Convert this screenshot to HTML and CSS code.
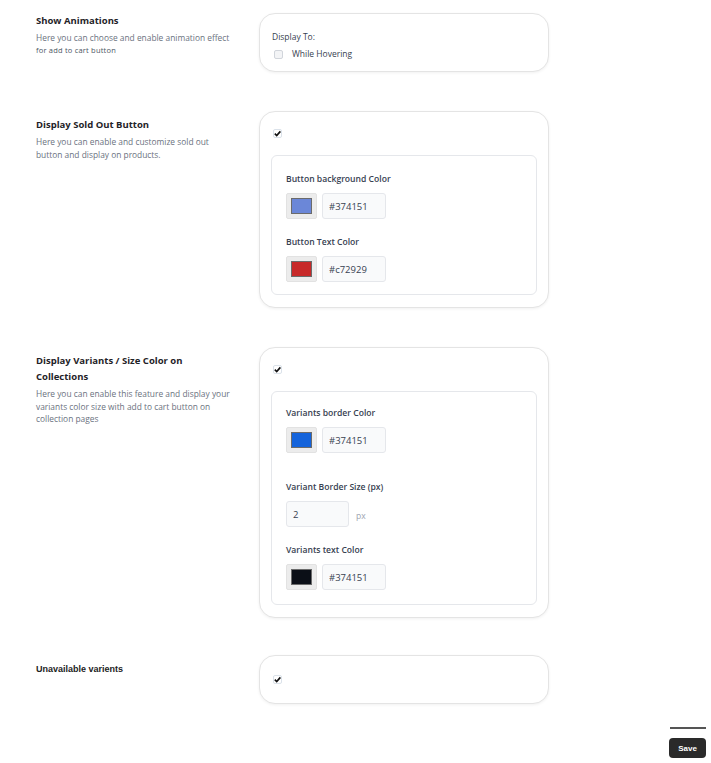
FILE: index.html
```html
<!DOCTYPE html>
<html lang="en">
<head>
  <meta charset="UTF-8">
  <title>Settings</title>
  <link rel="stylesheet" href="styles.css">
</head>
<body>
  <div class="settings">

    <!-- Show animations -->
    <div class="row">
      <div class="info info-top">
        <h3>Show Animations</h3>
        <p>Here you can choose and enable animation effect <span class="small">for add to cart button</span></p>
      </div>
      <div class="card card-anim">
        <div class="label-plain">Display To:</div>
        <label class="check-line">
          <span class="check"></span>
          While Hovering
        </label>
      </div>
    </div>

    <!-- Sold out button -->
    <div class="row">
      <div class="info">
        <h3>Display Sold Out Button</h3>
        <p>Here you can enable and customize sold out button and display on products.</p>
      </div>
      <div class="card">
        <span class="check checked"><svg viewBox="0 0 10 10"><path d="M2 5.2 L4.1 7.2 L8.2 2.6"/></svg></span>
        <div class="inner">
          <div class="field">
            <div class="field-label">Button background Color</div>
            <div class="color-line">
              <span class="swatch"><span class="fill" style="background:#6b87d8"></span></span>
              <input class="text-input" type="text" value="#374151">
            </div>
          </div>
          <div class="field">
            <div class="field-label">Button Text Color</div>
            <div class="color-line">
              <span class="swatch"><span class="fill" style="background:#c72929"></span></span>
              <input class="text-input" type="text" value="#c72929">
            </div>
          </div>
        </div>
      </div>
    </div>

    <!-- Variants on collections -->
    <div class="row row-tight">
      <div class="info">
        <h3>Display Variants / Size Color on Collections</h3>
        <p>Here you can enable this feature and display your variants color size with add to cart button on collection pages</p>
      </div>
      <div class="card">
        <span class="check checked"><svg viewBox="0 0 10 10"><path d="M2 5.2 L4.1 7.2 L8.2 2.6"/></svg></span>
        <div class="inner inner-variants">
          <div class="field">
            <div class="field-label">Variants border Color</div>
            <div class="color-line">
              <span class="swatch"><span class="fill" style="background:#1463db"></span></span>
              <input class="text-input" type="text" value="#374151">
            </div>
          </div>
          <div class="field field-gap">
            <div class="field-label">Variant Border Size (px)</div>
            <div class="color-line">
              <input class="text-input size-input" type="text" value="2">
              <span class="unit">px</span>
            </div>
          </div>
          <div class="field">
            <div class="field-label">Variants text Color</div>
            <div class="color-line">
              <span class="swatch"><span class="fill" style="background:#0b0f17"></span></span>
              <input class="text-input" type="text" value="#374151">
            </div>
          </div>
        </div>
      </div>
    </div>

    <!-- Unavailable -->
    <div class="row">
      <div class="info">
        <h3 class="title-alt">Unavailable varients</h3>
      </div>
      <div class="card card-single">
        <span class="check checked"><svg viewBox="0 0 10 10"><path d="M2 5.2 L4.1 7.2 L8.2 2.6"/></svg></span>
      </div>
    </div>

  </div>

  <div class="footer">
    <div class="footer-bar"></div>
    <button class="save-btn">Save</button>
  </div>
</body>
</html>
```

FILE: styles.css
```css
body {
  margin: 0;
  font-family: "Open Sans", "Noto Sans", Arial, sans-serif;
  color: #1f2937;
  background: #fff;
}
.settings {
  padding: 13px 0 0 36px;
}
.row {
  display: grid;
  grid-template-columns: 223px 290px;
  margin-bottom: 39px;
}
.row-tight {
  margin-bottom: 37px;
}
.row:last-child {
  margin-bottom: 0;
}
.info {
  padding: 6px 26px 0 0;
}
.info-top {
  padding-top: 0;
}
.info h3 {
  margin: 0 0 3px;
  font-size: 9.5px;
  font-weight: 700;
  line-height: 16px;
  color: #1f2328;
}
.info .title-alt {
  font-family: "Liberation Sans", Arial, sans-serif;
  font-size: 9px;
  color: #222;
}
.info p {
  margin: 0;
  font-size: 8.4px;
  line-height: 12.5px;
  color: #6b7280;
}
.info .small {
  display: block;
  font-size: 7.5px;
  line-height: 10px;
  color: #4b5563;
  letter-spacing: 0.2px;
}
.card {
  border: 1px solid #e4e4e4;
  border-radius: 16px;
  padding: 17px 11px 12px;
  box-shadow: 0 1px 3px rgba(0, 0, 0, 0.06);
  background: #fff;
}
.card-anim {
  height: 59px;
  box-sizing: border-box;
  padding: 17px 12px 0;
}
.card-single {
  height: 49px;
  box-sizing: border-box;
  padding-top: 19px;
}
.label-plain {
  font-size: 8.5px;
  line-height: 12px;
  color: #374151;
  margin-bottom: 5px;
}
.check-line {
  display: flex;
  align-items: center;
  gap: 9px;
  font-size: 8.5px;
  line-height: 12px;
  color: #374151;
}
.check {
  display: flex;
  width: 9px;
  height: 9px;
  border: 1px solid #d1d5db;
  border-radius: 2px;
  background: #f3f4f6;
  box-sizing: border-box;
  margin-left: 2px;
}
.check.checked {
  background: #fff;
  border-color: #dbe2ea;
}
.check svg {
  width: 9px;
  height: 9px;
  margin: -1px;
}
.check svg path {
  fill: none;
  stroke: #111;
  stroke-width: 1.8;
}
.inner {
  margin-top: 17px;
  border: 1px solid #e5e7eb;
  border-radius: 6px;
  padding: 17px 14px 12px;
}
.inner-variants {
  padding-top: 15px;
  padding-bottom: 14px;
}
.field {
  margin-bottom: 17px;
}
.field:last-child {
  margin-bottom: 0;
}
.field-gap {
  margin-top: 28px;
}
.field-label {
  font-size: 8.6px;
  font-weight: 600;
  line-height: 12px;
  color: #374151;
  margin-bottom: 8px;
}
.color-line {
  display: flex;
  align-items: center;
  gap: 5px;
}
.swatch {
  display: flex;
  width: 31px;
  height: 26px;
  box-sizing: border-box;
  padding: 4px;
  background: #ececec;
  border: 1px solid #e2e2e2;
  border-radius: 2px;
}
.fill {
  flex: 1;
  border: 1px solid #6b6b6b;
}
.text-input {
  width: 64px;
  height: 26px;
  box-sizing: border-box;
  padding: 0 6px;
  border: 1px solid #e5e7eb;
  border-radius: 3px;
  background: #f9fafb;
  font-family: "Open Sans", Arial, sans-serif;
  font-size: 9.5px;
  color: #374151;
}
.size-input {
  width: 63px;
}
.unit {
  font-size: 8.5px;
  color: #9ca3af;
  margin-left: 2px;
  padding-top: 3px;
}
.footer {
  display: flex;
  flex-direction: column;
  align-items: flex-end;
  padding: 23px 5px 0 0;
}
.footer-bar {
  width: 36px;
  height: 2px;
  background: #555;
  margin-bottom: 9px;
}
.save-btn {
  width: 37px;
  height: 20px;
  background: #2a2a2a;
  color: #fff;
  border: none;
  border-radius: 4px;
  font-family: "Liberation Sans", Arial, sans-serif;
  font-size: 8px;
  font-weight: 700;
  padding: 0;
}
```
